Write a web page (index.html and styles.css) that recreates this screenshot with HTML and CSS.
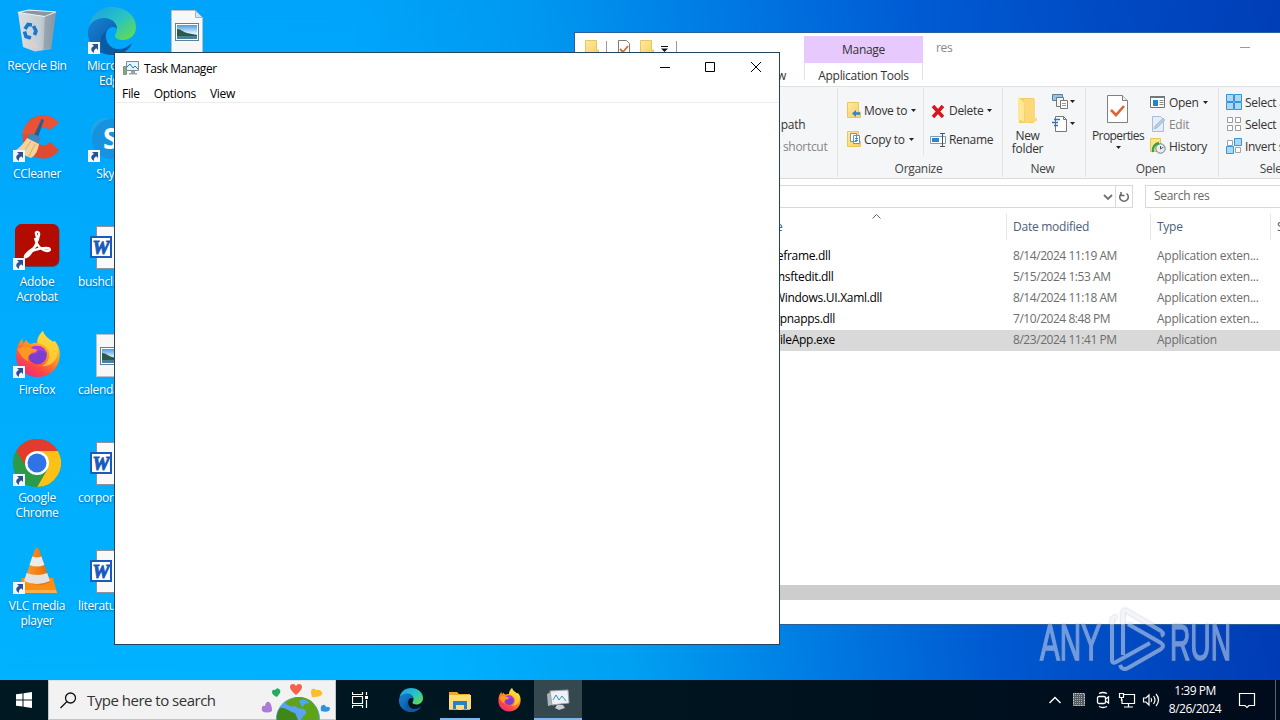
FILE: index.html
```html
<!DOCTYPE html>
<html lang="en">

<head>
    <meta charset="UTF-8">
    <meta name="viewport" content="width=device-width, initial-scale=1.0">
    <title>Desktop</title>
    <link rel="stylesheet" href="styles.css">
</head>

<body>
    <!-- shared icons -->
    <svg class="defs" width="0" height="0">
        <defs>
            <linearGradient id="gEdge1" x1="0" y1="0" x2="1" y2="1">
                <stop offset="0" stop-color="#1a9ee6" />
                <stop offset=".5" stop-color="#27c3c6" />
                <stop offset="1" stop-color="#6be03a" />
            </linearGradient>
            <linearGradient id="gEdge2" x1="0" y1="0" x2="1" y2="1">
                <stop offset="0" stop-color="#1583d8" />
                <stop offset="1" stop-color="#0d4a94" />
            </linearGradient>
            <linearGradient id="gFox" x1=".8" y1="0" x2=".2" y2="1">
                <stop offset="0" stop-color="#fff04a" />
                <stop offset=".4" stop-color="#ff9a1f" />
                <stop offset=".75" stop-color="#ff4448" />
                <stop offset="1" stop-color="#e8258c" />
            </linearGradient>
            <linearGradient id="gFolder" x1="0" y1="0" x2="1" y2="1">
                <stop offset="0" stop-color="#ffe9a2" />
                <stop offset="1" stop-color="#f7cf5c" />
            </linearGradient>
            <linearGradient id="gCone" x1="0" y1="0" x2="1" y2="0">
                <stop offset="0" stop-color="#ff9a2e" />
                <stop offset="1" stop-color="#e56a00" />
            </linearGradient>
            <linearGradient id="gSky" x1="0" y1="0" x2="0" y2="1">
                <stop offset="0" stop-color="#4b9be0" />
                <stop offset=".6" stop-color="#e2f2fb" />
                <stop offset="1" stop-color="#7fb5d0" />
            </linearGradient>
            <linearGradient id="gBin" x1="0" y1="0" x2="1" y2="0">
                <stop offset="0" stop-color="#d9dfe4" />
                <stop offset=".6" stop-color="#c3ccd3" />
                <stop offset="1" stop-color="#8796a2" />
            </linearGradient>
        </defs>
        <symbol id="shortcut" viewBox="0 0 12 12">
            <rect width="12" height="12" fill="#f4f6fa" />
            <path d="M4 2h6v6L8.200 6.200C6.300 7.300 5.600 8.800 6 11 1.800 8.500 3 5.200 6 4z" fill="#2a5290" />
        </symbol>
        <symbol id="edge" viewBox="0 0 48 48">
            <path d="M1 21C2 8 12 0 24 0c14 0 24 9 24 20 0 8-6 13-13 13-5 0-8-2-8-4 0-2 2-3 2-7 0-5-5-10-12-10C9 12 3 15 1 21z" fill="url(#gEdge1)" />
            <path d="M0 24C1 16 8 11 16 11c8 0 13 5 13 11-3-4-11-2-11 7 0 9 8 15 19 15-4 3-8 4-13 4C10 48-1 37 0 24z" fill="url(#gEdge2)" />
            <path d="M19 24c-5 8 0 17 10 18 6 .500 11-2 15-6-2 7-10 12-20 12-7-2-11-7-11-14 0-5 2-8 6-10z" fill="#0c59a4" />
        </symbol>
        <symbol id="firefox" viewBox="0 0 48 48">
            <path d="M3 22C3 17 5 12 9 8l1 5 3-4c1 3 3 4 5 4 2-1 4-1 6-1 0-5 3-9 6-12 2 7 7 8 10 11l2-1c4 5 6 9 5 17-1 12-11 20-23 20S1 37 3 22z" fill="url(#gFox)" />
            <path d="M30 0c-4 4-6 8-5 13 5 0 9 3 11 8 2 6-1 12-7 15 11 0 17-8 16-18-1-8-12-9-15-18z" fill="#ffd83b" opacity=".75" />
            <circle cx="24.500" cy="24.500" r="9.500" fill="#7b3fd0" />
            <path d="M15 24c0-5 3-8 7-9 6 0 11 3 12 9-3-4-7-5-9-3-1 3-6 3-10 3z" fill="#b33bd8" />
            <path d="M4 18c3 1 5-3 9-2 3 0 4 2 11 3 0 3-4 3-6 4-3 2-4 5-3 8-6-3-8-7-11-13z" fill="#ff9924" />
        </symbol>
        <symbol id="worddoc" viewBox="0 0 48 48">
            <path d="M8.500 3.500h24l8 8v34h-32z" fill="#f9f9f9" stroke="#8d9499" />
            <rect x="3" y="14" width="20" height="20" fill="#fff" stroke="#185abd" stroke-width="2" />
            <text x="4.500" y="30.500" class="word-letter" textLength="17" lengthAdjust="spacingAndGlyphs">W</text>
        </symbol>
        <symbol id="imagedoc" viewBox="0 0 48 48">
            <path d="M8.500 3.500h24l7 7v35h-31z" fill="#f7f7f7" stroke="#b9c0c4" />
            <path d="M32.500 3.500v7h7z" fill="#cfe6f3" stroke="#9fb6c4" />
            <rect x="12.500" y="16.500" width="23" height="17" fill="#fff" stroke="#5c8299" />
            <rect x="14" y="18" width="20" height="14" fill="url(#gSky)" />
            <path d="M14 22c4 0 6 3 10 4l10 2v1H14z" fill="#2a5b48" />
            <path d="M14 29h20v3H14z" fill="#4c7f9c" />
        </symbol>
        <symbol id="folder" viewBox="0 0 14 16">
            <path d="M.500.500h11v9.500l2 0v5.500H.500z" fill="url(#gFolder)" stroke="#eac65e" />
        </symbol>
        <symbol id="caret" viewBox="0 0 5 3">
            <path d="M0 0h5L2.500 3z" fill="#222" />
        </symbol>
    </svg>

    <div class="desktop">
        <div class="icons">
            <div class="icon">
                <svg width="48" height="48">
                    <path d="M5 5.500 32 9l11-4-5 37-16 2.500L10 40z" fill="url(#gBin)" />
                    <path d="M5 5.500 16 3l27 2-11 4.500z" fill="#8a979f" stroke="#eef3f6" stroke-width="1.200" />
                    <path d="M32 9.500 30.500 43 38 41 43 5.500z" fill="#8798a4" opacity=".65" />
                    <g fill="none" stroke="#1878d0" stroke-width="3.600">
                        <path d="m12 22 3-4.500 4 .500" />
                        <path d="m20.500 19 2.500 5-1.500 4" />
                        <path d="m18 31-5-1.500-1.500-5" />
                    </g>
                    <path d="m13 36 5-4 8 8-4 2z" fill="#e9cdbf" opacity=".6" />
                </svg>
                <span>Recycle Bin</span>
            </div>
            <div class="icon">
                <svg width="48" height="48">
                    <path d="M46 8 36 15c-5-5-13-2-13 7 0 8 8 11 14 5l9 8c-5 7-12 10-20 8C7 40 5 14 18 4c9-6 20-5 28 4z" fill="#e04a2e" />
                    <path d="M46 8 36 15c-5-5-13-2-13 7L9 19C10 6 32-9 46 8z" fill="#f0593a" opacity=".6" />
                    <path d="M28.500 4 31 5l-6 17-4-2z" fill="#2d5c8c" />
                    <path d="m17 18 11 4-3 8-11-6z" fill="#3f86bd" />
                    <path d="M14 23 26 29c-1 6-3 11-8 14L1 36c5-2 9-7 13-13z" fill="#f3d29b" />
                    <path d="m18 26-8 12m12-9-6 12" stroke="#d9ae6c" />
                    <use href="#shortcut" y="35" width="12" height="12" />
                </svg>
                <span>CCleaner</span>
            </div>
            <div class="icon">
                <svg width="48" height="48">
                    <rect x="2" y="1" width="44.500" height="43" rx="7" fill="#7a0f0a" opacity=".55" />
                    <rect x="2" y="1" width="44" height="42" rx="7" fill="#b40b00" />
                    <path d="M12 33c2-4 7-6 11-10 2-5 1-9 0-12-1-3 4-3 3 1-1 5-3 11-9 19-3 4-6 4-5 2 4-5 14-8 21-8 5 0 5 3 1 3-6-1-11-6-12-13" fill="none" stroke="#fff" stroke-width="2.300" stroke-linejoin="round" />
                    <use href="#shortcut" y="35" width="12" height="12" />
                </svg>
                <span>Adobe<br>Acrobat</span>
            </div>
            <div class="icon">
                <svg width="48" height="48">
                    <use href="#firefox" width="48" height="47" />
                    <use href="#shortcut" y="35" width="12" height="12" />
                </svg>
                <span>Firefox</span>
            </div>
            <div class="icon">
                <svg width="48" height="48">
                    <circle cx="24" cy="24" r="24" fill="#2c9a48" />
                    <path d="M24 24 3.200 12A24 24 0 0 1 44.800 12z" fill="#e33b2e" />
                    <path d="M24 12h20.800A24 24 0 0 1 24 48l10.400-18z" fill="#fbc116" />
                    <path d="M3.200 12 13.600 30 24 24V12z" fill="#e33b2e" />
                    <path d="M3.200 12A24 24 0 0 0 24 48l10-17-20-2z" fill="#2c9a48" />
                    <circle cx="24" cy="24" r="12" fill="#fff" />
                    <circle cx="24" cy="24" r="9.500" fill="#2f74e6" />
                    <use href="#shortcut" y="35" width="12" height="12" />
                </svg>
                <span>Google<br>Chrome</span>
            </div>
            <div class="icon">
                <svg width="48" height="48">
                    <path d="M9 31h31l4 15H5z" fill="#ff8d12" />
                    <path d="m5 43-1 3h40l-1-3z" fill="#ffb04a" />
                    <path d="M22 2q2-2 4 0l11 33q-13 7-26 0z" fill="url(#gCone)" />
                    <path d="m19.400 9.500-3 8.500q7.500 3 15 0l-3-8.500q-4.500 2-9 0z" fill="#ecebea" />
                    <path d="m13.600 26-2.600 8q13 6 26 0l-2.800-8q-10 4-20.600 0z" fill="#e3e2e1" />
                    <use href="#shortcut" y="35" width="12" height="12" />
                </svg>
                <span>VLC media<br>player</span>
            </div>
            <div class="icon">
                <svg width="48" height="48">
                    <use href="#edge" width="48" height="48" />
                    <use href="#shortcut" y="35" width="12" height="12" />
                </svg>
                <span>Microsoft<br>Edge</span>
            </div>
            <div class="icon">
                <svg width="48" height="48">
                    <circle cx="17" cy="17" r="14" fill="#1fa5e8" />
                    <circle cx="30" cy="30" r="14" fill="#0a6fd0" />
                    <circle cx="24" cy="24" r="20" fill="#1593e0" />
                    <text x="15" y="34" class="skype-letter">S</text>
                    <use href="#shortcut" y="35" width="12" height="12" />
                </svg>
                <span>Skype</span>
            </div>
            <div class="icon file">
                <svg width="48" height="48"><use href="#worddoc" /></svg>
                <span>bushclick.rtf</span>
            </div>
            <div class="icon file">
                <svg width="48" height="48"><use href="#imagedoc" /></svg>
                <span>calendarno...</span>
            </div>
            <div class="icon file">
                <svg width="48" height="48"><use href="#worddoc" /></svg>
                <span>corporate.rtf</span>
            </div>
            <div class="icon file">
                <svg width="48" height="48"><use href="#worddoc" /></svg>
                <span>literature.rtf</span>
            </div>
            <div class="icon">
                <svg width="48" height="48"><use href="#imagedoc" /></svg>
            </div>
        </div>

        <!-- file explorer -->
        <div class="window explorer">
            <div class="ex-title">
                <div class="quick">
                    <svg width="100" height="20">
                        <use href="#folder" x="0" y="2" width="14" height="16" />
                        <path d="M21.500 3v15M91.500 3v15" stroke="#999" />
                        <path d="M33.500 2.500h8l3 3v13h-11z" fill="#fff" stroke="#7d7d7d" />
                        <path d="m35 11 3 3 5-6" fill="none" stroke="#dc6436" stroke-width="1.800" />
                        <use href="#folder" x="55" y="2" width="14" height="16" />
                        <path d="M76 8.500h7" stroke="#111" />
                        <path d="M76 10.500h7l-3.500 3.500z" fill="#111" />
                    </svg>
                </div>
                <div class="manage">Manage</div>
                <span class="ex-name">res</span>
                <i class="ex-min"></i>
            </div>
            <div class="ex-tabs">
                <span class="tab-view">View</span>
                <span class="tab-app">Application Tools</span>
            </div>
            <div class="ribbon">
                <div class="group g-clip">
                    <div class="cmds three">
                        <p>&nbsp;</p>
                        <p>Copy path</p>
                        <p class="off">Paste shortcut</p>
                    </div>
                    <h4>Clipboard</h4>
                </div>
                <div class="group g-org">
                    <div class="cols">
                        <div class="cmds two move">
                            <p>
                                <svg width="14" height="17"><use href="#folder" width="14" height="16" /><path d="M13 11.500H8" stroke="#2d86c8" stroke-width="2.500" /><path d="M5 11.500 9 8v7z" fill="#2d86c8" /></svg>
                                <span>Move to</span>
                                <svg class="caret" width="5" height="3"><use href="#caret" /></svg>
                            </p>
                            <p>
                                <svg width="14" height="17"><use href="#folder" width="14" height="16" /><path d="M3.500 2.500h6v8h-6zM6.500 4.500h6v8h-6z" fill="#fff" stroke="#7891a5" /><path d="M8 7.500h3M8 9.500h3" stroke="#3b86c6" /></svg>
                                <span>Copy to</span>
                                <svg class="caret" width="5" height="3"><use href="#caret" /></svg>
                            </p>
                        </div>
                        <div class="cmds two del">
                            <p>
                                <svg width="16" height="16"><path d="m3 3 10 11M13 3 3 14" stroke="#d9141e" stroke-width="3.400" /></svg>
                                <span>Delete</span>
                                <svg class="caret" width="5" height="3"><use href="#caret" /></svg>
                            </p>
                            <p>
                                <svg width="16" height="16"><path d="M.500 4.500h15v7H.500z" fill="#fff" stroke="#7c9cb8" /><path d="M2 6h7v4H2z" fill="#2b87d3" /><path d="M12.500 1.500v13M10 1.500h5M10 14.500h5" stroke="#48566a" /></svg>
                                <span>Rename</span>
                            </p>
                        </div>
                    </div>
                    <h4>Organize</h4>
                </div>
                <div class="group g-new">
                    <div class="cols">
                        <div class="big">
                            <svg width="22" height="28"><path d="M2 3h15v25H2z" fill="#f4cc63" /><path d="M1 2 7 7v20L1 24z" fill="#ffe798" /><path d="M7 4h11v19h2v3L8 28z" fill="#fbd978" /></svg>
                            <span>New<br>folder</span>
                        </div>
                        <div class="minis">
                            <svg width="26" height="18"><path d="M.500 1.500h10v6h-10z" fill="#8fc5ec" stroke="#5b8097" /><path d="M4.500 4.500h7v9h-7z" fill="#f4f4f4" stroke="#777" /><path d="M8.500 7.500h7v8h-7z" fill="#fff" stroke="#777" /><path d="M10 10.500h4M10 12.500h4" stroke="#999" /><use href="#caret" x="18" y="7" width="5" height="3" /></svg>
                            <svg width="26" height="18"><path d="M3.500 1.500h8l3 3v12h-11z" fill="#fff" stroke="#777" /><path d="M11.500 1.500v3h3" fill="none" stroke="#777" /><path d="M2 4.500h6M0 7.500h6M2 10.500h4" stroke="#2f75b5" stroke-width="1.400" /><use href="#caret" x="18" y="7" width="5" height="3" /></svg>
                        </div>
                    </div>
                    <h4>New</h4>
                </div>
                <div class="group g-open">
                    <div class="cols">
                        <div class="big props">
                            <svg width="22" height="29"><path d="M.500.500h15l5 5v22H.500z" fill="#fff" stroke="#808080" /><path d="M15.500.500v5h5" fill="#eee" stroke="#808080" /><path d="m4 15 5 5 8-9" fill="none" stroke="#dc6231" stroke-width="2.600" /></svg>
                            <span>Properties</span>
                            <svg class="caret" width="5" height="3"><use href="#caret" /></svg>
                        </div>
                        <div class="cmds three">
                            <p>
                                <svg width="16" height="16"><path d="M.500 2.500h14v11H.500z" fill="#fff" stroke="#6f7377" /><path d="M0 2h15v2H0z" fill="#707880" /><path d="M3 6h5v6H3z" fill="#2383cf" /><path d="M9.500 6.500h4M9.500 8.500h4M9.500 10.500h4" stroke="#888" /></svg>
                                <span>Open</span>
                                <svg class="caret" width="5" height="3"><use href="#caret" /></svg>
                            </p>
                            <p class="off">
                                <svg width="16" height="16"><path d="M2.500.500h8l3 3v12h-11z" fill="#e5eef8" stroke="#a9bdd6" /><path d="m4 13 1-3 8-8 2 2-8 8z" fill="#b5cae4" stroke="#9ab2d2" stroke-width=".600" /></svg>
                                <span>Edit</span>
                            </p>
                            <p>
                                <svg width="16" height="16"><path d="M.500.500h10v13H.500z" fill="#ffe48a" stroke="#e8c45d" /><circle cx="10.500" cy="10.500" r="4.700" fill="#e9eef0" stroke="#6f7c82" /><path d="M10.500 8v3l3-2" fill="none" stroke="#555" /><path d="M3 14c-1-5 2-8 6-9" fill="none" stroke="#32a343" stroke-width="2.400" /></svg>
                                <span>History</span>
                            </p>
                        </div>
                    </div>
                    <h4>Open</h4>
                </div>
                <div class="group g-select">
                    <div class="cmds three">
                        <p>
                            <svg width="16" height="16"><path d="M.500.500h7v7h-7zM8.500.500h7v7h-7zM.500 8.500h7v7h-7zM8.500 8.500h7v7h-7z" fill="#a8d8fa" stroke="#3a93d2" /></svg>
                            <span>Select all</span>
                        </p>
                        <p>
                            <svg width="16" height="16"><path d="M1.500 1.500h5v5h-5zM9.500 1.500h5v5h-5zM1.500 9.500h5v5h-5zM9.500 9.500h5v5h-5z" fill="#fff" stroke="#9b9b9b" /></svg>
                            <span>Select none</span>
                        </p>
                        <p>
                            <svg width="16" height="16"><path d="M1.500 2.500h5v5h-5zM9.500 9.500h5v5h-5z" fill="#fff" stroke="#9aa4ac" /><path d="M8.500.500h7v7h-7zM.500 8.500h7v7h-7z" fill="#a8d8fa" stroke="#3a93d2" /></svg>
                            <span>Invert selection</span>
                        </p>
                    </div>
                    <h4>Select</h4>
                </div>
            </div>
            <div class="address">
                <div class="path">
                    <svg width="10" height="10"><path d="m1 3 4 4 4-4" fill="none" stroke="#707070" stroke-width="1.800" /></svg>
                    <div class="refresh"><svg width="12" height="12"><path d="M8.500 2.500a4.300 4.300 0 1 1-5 0M3 1v3.500h3.500" fill="none" stroke="#666" stroke-width="1.500" /></svg></div>
                </div>
                <div class="search">Search res</div>
            </div>
            <div class="row head">
                <span>Name<svg class="sort" width="9" height="5"><path d="m.500 4.500 4-4 4 4" fill="none" stroke="#666" /></svg></span>
                <span>Date modified</span><span>Type</span><span>Size</span>
            </div>
            <div class="files">
                <div class="row"><span>ieframe.dll</span><span class="date">8/14/2024 11:19 AM</span><span>Application exten...</span></div>
                <div class="row"><span>msftedit.dll</span><span class="date">5/15/2024 1:53 AM</span><span>Application exten...</span></div>
                <div class="row"><span>Windows.UI.Xaml.dll</span><span class="date">8/14/2024 11:18 AM</span><span>Application exten...</span></div>
                <div class="row"><span>vpnapps.dll</span><span class="date">7/10/2024 8:48 PM</span><span>Application exten...</span></div>
                <div class="row selected"><span>FileApp.exe</span><span class="date">8/23/2024 11:41 PM</span><span>Application</span></div>
            </div>
            <div class="hscroll"></div>
            <div class="status"></div>
        </div>

        <!-- task manager -->
        <div class="window taskmgr">
            <div class="tm-title">
                <svg width="16" height="16">
                    <path d="M.500 6.500h3v8h-3z" fill="#7fae7a" stroke="#8a8f92" />
                    <path d="M3.500 1.500h12v9h-12z" fill="#e4f3fb" stroke="#7e8b94" />
                    <path d="m4 7 3-3 3 4 2-2 3 3" fill="none" stroke="#2a7fa8" />
                    <path d="M8 11h4v2h2v1.500H6V13h2z" fill="#9aa4aa" />
                </svg>
                <span>Task Manager</span>
                <div class="controls">
                    <svg width="46" height="30"><path d="M19 14.500h10" stroke="#000" /></svg>
                    <svg width="46" height="30"><path d="M18.500 9.500h9v9h-9z" fill="none" stroke="#000" /></svg>
                    <svg width="46" height="30"><path d="m18 9 10 10M28 9 18 19" stroke="#000" /></svg>
                </div>
            </div>
            <div class="tm-menu"><span>File</span><span>Options</span><span>View</span></div>
        </div>

        <div class="watermark">
            <svg width="200" height="66">
                <g class="wm-text">
                    <text x="4" y="52.500" textLength="61" lengthAdjust="spacingAndGlyphs">ANY</text>
                    <text x="134" y="52.500" textLength="61" lengthAdjust="spacingAndGlyphs">RUN</text>
                </g>
                <g class="wm-logo">
                    <path d="M81 10q-5 0-5 5v38q0 4 4 2l34-19" />
                    <path d="M87 48V6q0-4 4-2l34 20q4 3 0 5" />
                    <path d="M84 58q2 6 8 3l33-19q4-3 0-6L92 17" />
                </g>
            </svg>
        </div>
    </div>

    <div class="taskbar">
        <div class="start">
            <svg width="16" height="16"><path d="M0 2.300 6.500 1.400v6.100H0zM7.500 1.200 16 0v7.500H7.500zM0 8.500h6.500v6.100L0 13.700zM7.500 8.500H16V16l-8.500-1.200z" fill="#fff" /></svg>
        </div>
        <div class="searchbox">
            <svg width="17" height="17"><circle cx="10.500" cy="6" r="5" fill="none" stroke="#111" stroke-width="1.300" /><path d="m7 9.500-6.500 6.500" stroke="#111" stroke-width="1.300" /></svg>
            <span>Type here to search</span>
            <svg class="earth" width="72" height="39">
                <circle cx="37" cy="38" r="22" fill="#5aa3f0" />
                <path d="M24 22c8-8 22-8 29 1 4 4 5 11 5 16H40c2-5 6-5 5-9-3-4-8-1-10-5-4 1-8 0-11-3z" fill="#5fa316" />
                <path d="M19 27c6-1 9 4 15 5l3 7H16c-1-5 1-9 3-12z" fill="#3f8719" />
                <path d="M38 20c3-3 9-1 10 2l-4 1-3 3z" fill="#4aa8f5" />
                <path d="M35 14q-6-5-6-8 0-3 3-3 2 0 3 2 1-2 3-2 3 0 3 3 0 3-6 8z" fill="#f4624c" />
                <path d="M16 16q-5-2-5-5 0-3 3-2 2-3 4-1 2 1 1 4z" fill="#22ab61" />
                <path d="M51 16q-2-6 0-8 3-1 4 1 4-1 6 2 2 5-10 5z" fill="#fcbd2c" />
                <path d="M1 30q-1-6 3-5 1-5 4-4 3 2 3 9-5 3-10 0z" fill="#ac7bd9" />
                <path d="M60 30q-1-6 2-6 2-1 3 2 4-1 4 2-1 4-9 2z" fill="#2a93e3" />
            </svg>
        </div>
        <div class="tb view">
            <svg width="17" height="16"><path d="M.500 0v2.500h10V0M.500 16v-2.500h10V16M.500 4.500h10v7H.500zM14.500 0v3M14.500 8v8" fill="none" stroke="#fff" stroke-width="1.200" /><path d="M13 4h3v3h-3z" fill="#fff" /></svg>
        </div>
        <div class="tb gap"><svg width="24" height="24"><use href="#edge" width="24" height="24" /></svg></div>
        <div class="tb open">
            <svg width="22" height="20"><path d="M0 1h8l2 2h11v16H0z" fill="#f2a922" /><path d="M0 4h22v14H0z" fill="#ffdc73" /><path d="M4 10h14v8h-3v-4H7v4H4z" fill="#2584c9" /><path d="M9 14h4v5H9z" fill="#ffdc73" /></svg>
        </div>
        <div class="tb"><svg width="24" height="24"><use href="#firefox" width="24" height="24" /></svg></div>
        <div class="tb active">
            <svg width="24" height="22"><path d="m1 5 6-3 3 13-8 2z" fill="#aeb5b9" /><path d="m4 2 18-1 1 13-17 2z" fill="#eef2f4" stroke="#9ba5ab" /><path d="m7 11 3-5 3 5 3-4 4 5" fill="none" stroke="#3a8fc4" /><path d="M11 16h6l2 3-6 2-4-2z" fill="#c9ced1" /></svg>
        </div>
        <div class="tray">
            <svg width="24" height="20"><path d="m6.500 13 5.500-5.500 5.500 5.500" fill="none" stroke="#fff" stroke-width="1.400" /></svg>
            <svg width="24" height="20"><path d="M6.500 3.500h11v12h-11z" fill="#555c62" stroke="#e4e4e4" stroke-dasharray="1 .600" /><path d="M8 5.500h8M8 7.500h8M8 9.500h8M8 11.500h8M8 13.500h8" stroke="#a0a5a8" stroke-dasharray="1 1" /></svg>
            <svg width="24" height="20"><g fill="none" stroke="#fff" stroke-width="1.300"><rect x="6.500" y="6.500" width="8" height="7" rx="1.500" /><path d="m14.500 9 3-2v6l-3-2M8 3.500q4-2 8 0M8 16.500q4 2 8 0" /></g></svg>
            <svg width="24" height="20"><path d="M9 4.500h10.500v9H7V9M13.500 13.500v3M9 17h9M4.500 3.500h4v4h-4zM6.500 7v4" fill="none" stroke="#fff" stroke-width="1.200" /></svg>
            <svg width="24" height="20"><path d="M4.500 8h2.500l3-3v10l-3-3H4.500zM12 8q1.500 2 0 4M14.500 6q3 4 0 8M17 4q5 6 0 12" fill="none" stroke="#fff" stroke-width="1.200" /></svg>
            <div class="clock">1:39 PM<br>8/26/2024</div>
            <svg class="notice" width="18" height="17"><path d="M1.500 1.500h15v12H11L9 15.500 7 13.500H1.500z" fill="none" stroke="#fff" stroke-width="1.200" /></svg>
            <i class="peek"></i>
        </div>
    </div>
</body>

</html>
```
FILE: styles.css
```css
* {
    margin: 0;
    padding: 0;
    box-sizing: border-box;
}

body {
    width: 1280px;
    height: 720px;
    overflow: hidden;
    font-family: "Open Sans", "Noto Sans", sans-serif;
    font-size: 12px;
    letter-spacing: -0.3px;
    line-height: 15px;
}

svg {
    display: block;
    flex: none;
}

.defs {
    position: absolute;
}

.desktop {
    position: relative;
    height: 680px;
    overflow: hidden;
    background:
        linear-gradient(rgba(0, 110, 230, .18), rgba(0, 110, 230, 0)),
        linear-gradient(82deg, #00b2ff 0%, #00b1ff 32%, #00a0f2 46%, #007ae2 60%, #0058d0 73%, #0043bc 87%, #0033ac 100%);
}

/* desktop icons */
.icons {
    display: grid;
    grid-template-columns: repeat(3, 74px);
    grid-template-rows: repeat(6, 108px);
    grid-auto-flow: column;
    column-gap: 1px;
    width: 224px;
}

.icon {
    display: flex;
    flex-direction: column;
    align-items: center;
    padding-top: 7px;
    color: #fff;
    text-align: center;
    text-shadow: 0 1px 2px rgba(0, 30, 80, .5);
}

.icon span {
    margin-top: 3px;
    white-space: nowrap;
}

.file span {
    align-self: flex-start;
    padding-left: 3px;
}

.word-letter {
    font: italic bold 19px "Liberation Serif", serif;
    fill: #185abd;
    stroke: #185abd;
    letter-spacing: 0;
    text-shadow: none;
}

.skype-letter {
    font: bold 28px "Open Sans", sans-serif;
    fill: #fff;
    text-shadow: none;
}

/* windows */
.window {
    position: absolute;
    background: #fff;
}

.explorer {
    left: 574px;
    top: 32px;
    width: 780px;
    height: 593px;
    border: 1px solid #2a5f9c;
    display: flex;
    flex-direction: column;
    color: #333;
}

.ex-title {
    display: flex;
    height: 30px;
}

.quick {
    width: 229px;
    padding: 5px 0 0 10px;
}

.manage {
    width: 119px;
    margin-top: 3px;
    background: #e8c9fd;
    text-align: center;
    line-height: 28px;
}

.ex-name {
    width: 314px;
    padding-left: 13px;
    line-height: 30px;
    color: #888;
}

.ex-min {
    width: 10px;
    height: 1px;
    margin: 14px 0 0 3px;
    background: #999;
}

.ex-tabs {
    display: flex;
    height: 23px;
    line-height: 25px;
}

.tab-view {
    width: 229px;
    padding-left: 186px;
}

.tab-app {
    width: 119px;
    height: 17px;
    border: solid #e4e0e8;
    border-width: 0 1px;
    text-align: center;
}

.ribbon {
    display: flex;
    height: 93px;
    background: #f5f6f7;
    border-top: 1px solid #e0e1e2;
    border-bottom: 1px solid #d9dadb;
}

.group {
    display: flex;
    flex-direction: column;
    height: 89px;
    margin-top: 1px;
    border-right: 1px solid #dfe1e3;
}

.group h4 {
    margin-top: auto;
    padding-right: 3px;
    height: 16px;
    font-size: 12px;
    font-weight: normal;
    text-align: center;
    color: #444;
}

.cols {
    display: flex;
}

.cmds p {
    display: flex;
    align-items: center;
    gap: 3px;
    white-space: nowrap;
}

.cmds .caret {
    margin-left: 1px;
}

.three {
    padding-top: 3px;
}

.three p {
    height: 22px;
}

.two {
    padding-top: 8px;
    height: 68px;
}

.two p {
    height: 29px;
}

.off {
    color: #858585;
}

.g-clip {
    width: 263px;
    padding-left: 176px;
}

.g-clip h4 {
    margin-left: -176px;
}

.g-org {
    width: 165px;
}

.move {
    width: 86px;
    padding-left: 9px;
    border-right: 1px solid #e2e4e6;
}

.del {
    padding-left: 6px;
}

.g-new {
    width: 83px;
}

.big {
    display: flex;
    flex-direction: column;
    align-items: center;
    width: 49px;
    padding-top: 7px;
    text-align: center;
    line-height: 13px;
}

.big span {
    margin-top: 6px;
}

.minis {
    display: flex;
    flex-direction: column;
    gap: 4px;
    padding: 5px 0 0 0;
}

.g-open {
    width: 133px;
}

.props {
    width: 64px;
    letter-spacing: -0.6px;
}

.props span {
    margin-top: 5px;
}

.props .caret {
    margin-top: 4px;
}

.g-select {
    width: 110px;
    padding-left: 7px;
}

.address {
    display: flex;
    height: 35px;
    padding-top: 6px;
}

.path {
    display: flex;
    align-items: center;
    justify-content: flex-end;
    width: 558px;
    height: 23px;
    border: 1px solid #d9d9d9;
    border-left: none;
}

.refresh {
    display: flex;
    align-items: center;
    justify-content: center;
    width: 17px;
    height: 21px;
    margin-left: 2px;
    border-left: 1px solid #d9d9d9;
}

.search {
    width: 200px;
    height: 23px;
    margin-left: 12px;
    padding-left: 8px;
    border: 1px solid #d9d9d9;
    line-height: 20px;
    color: #666;
}

.row {
    display: grid;
    grid-template-columns: 432px 144px 120px 80px;
    height: 21px;
    line-height: 20px;
    color: #6d6d6d;
}

.row span {
    padding-left: 6px;
    white-space: nowrap;
    letter-spacing: -0.25px;
}

.row span:first-child {
    padding-left: 199px;
    color: #000;
    letter-spacing: -0.3px;
}

.row .date {
    letter-spacing: -0.45px;
}

.head {
    height: 26px;
    line-height: 26px;
    color: #4c607a;
}

.head span {
    border-right: 1px solid #e5e5e5;
}

.head span:first-child {
    display: flex;
    padding-left: 175px;
    color: #4c607a;
}

.sort {
    margin: 0 0 0 90px;
}

.files {
    height: 345px;
    padding-top: 6px;
}

.selected {
    background: #d9d9d9;
}

.hscroll {
    height: 15px;
    background: #cdcdcd;
}

.taskmgr {
    left: 114px;
    top: 52px;
    width: 666px;
    height: 593px;
    border: 1px solid #24435c;
    color: #000;
}

.tm-title {
    display: flex;
    align-items: center;
    height: 30px;
    padding-left: 8px;
    gap: 5px;
    letter-spacing: -0.45px;
}

.controls {
    display: flex;
    margin-left: auto;
}

.tm-menu {
    display: flex;
    gap: 14px;
    height: 20px;
    padding-left: 7px;
    border-bottom: 1px solid #ececec;
    line-height: 21px;
}

.watermark {
    position: absolute;
    left: 1036px;
    top: 607px;
    opacity: .5;
    filter: drop-shadow(0 0 1px rgba(90, 90, 90, .7));
}

.wm-text {
    font: 50px "Liberation Sans", sans-serif;
    letter-spacing: 0;
    fill: #dfe7f5;
    stroke: #dfe7f5;
    stroke-width: 1.5px;
}

.wm-logo {
    fill: none;
    stroke: #e6ecf8;
    stroke-width: 4px;
}

/* taskbar */
.taskbar {
    display: flex;
    height: 40px;
    background: linear-gradient(90deg, #001822, #001520 50%, #000b1b);
    color: #fff;
}

.start {
    display: flex;
    align-items: center;
    justify-content: center;
    width: 48px;
}

.searchbox {
    display: flex;
    align-items: center;
    width: 288px;
    padding-left: 11px;
    background: #f2f2f2;
    border: 1px solid #c2c5c7;
    border-top-color: #e0e0e0;
    color: #333;
    font-size: 15px;
    letter-spacing: -0.5px;
}

.searchbox span {
    margin-left: 10px;
}

.earth {
    margin: 0 2px 0 auto;
}

.tb {
    display: flex;
    align-items: center;
    justify-content: center;
    width: 48px;
    margin-right: 1px;
}

.gap {
    margin-left: 2px;
}

.open {
    border: solid transparent;
    border-width: 2px 4px 0;
    background: linear-gradient(#7db6ea, #7db6ea) bottom / 40px 2px no-repeat;
}

.active {
    background: linear-gradient(#7db6ea, #7db6ea) bottom / 48px 2px no-repeat #35474f;
}

.tray {
    display: flex;
    align-items: center;
    width: 237px;
    margin-left: auto;
}

.clock {
    width: 64px;
    text-align: center;
    line-height: 18px;
    letter-spacing: -0.5px;
}

.notice {
    margin-left: 11px;
}

.peek {
    width: 1px;
    height: 40px;
    margin-left: 19px;
    background: #59616c;
}
```
